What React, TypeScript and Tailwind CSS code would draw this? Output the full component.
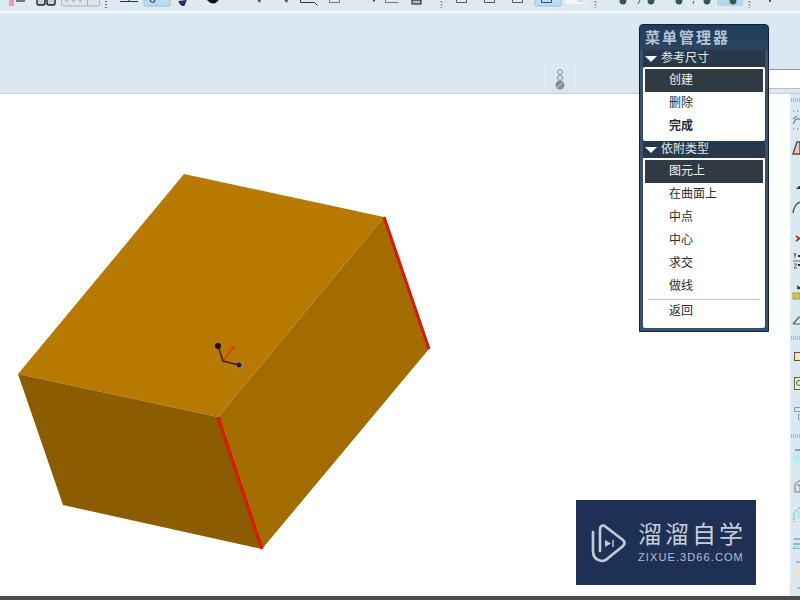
const sans = "font-['Liberation_Sans','Noto_Sans_CJK_SC',sans-serif]";

function TopIcons() {
  return (
    <svg width="800" height="11" viewBox="0 0 800 11" className="block">
      <rect x="9" y="0" width="5" height="6" fill="#e8a0a8" />
      <rect x="16" y="0" width="9" height="2" fill="#777" />
      <path d="M37 0v3q0 2 2 2h4q2 0 2-2V0M47 0v3q0 2 2 2h4q2 0 2-2V0" fill="#ccd" stroke="#222" strokeWidth="1.4" />
      <rect x="61.5" y="-3" width="38" height="9" rx="2" fill="#dde6ec" stroke="#a8b0b8" />
      <path d="M87.5 0v6" stroke="#a8b0b8" />
      <path d="M65 1h3M72 1h3M79 1h3" stroke="#999" />
      <path d="M106 1v1M106 4v1M106 7v1" stroke="#667" strokeWidth="2" strokeDasharray="1 1" />
      <path d="M120 1.5h18M129 0v1.5" stroke="#123a70" strokeWidth="1.2" />
      <rect x="144" y="-3" width="26" height="9" rx="1" fill="#bcdcf4" stroke="#9cc0da" />
      <path d="M150 0q1 3 4 2l1-2" fill="none" stroke="#145" strokeWidth="1.2" />
      <path d="M179 1q2 5 5 4l2-5" fill="#336" stroke="#127" strokeWidth="1.4" />
      <path d="M207 0q6 7 12 0z" fill="#111" />
      <path d="M257 0l3 3 1-3zM284 0l3 3 1-3z" fill="#556" />
      <path d="M300.5 0v2.5h14l3 3" fill="none" stroke="#333" />
      <path d="M329.5 0v2.5h10V0M385.5 0v2.5h13" fill="none" stroke="#777" />
      <path d="M373 0l1 2.5 1-2.5z" fill="#222" />
      <rect x="412" y="0" width="9" height="4" fill="#bbb" stroke="#111" />
      <path d="M441 1v1M441 4v1M441 7v1M442 2v1M442 5v1" stroke="#667" strokeDasharray="1 1" />
      <path d="M456.5 0v2.5h10V0M484.5 0v2.5h10V0M512.5 0v2.5h10V0" fill="none" stroke="#556" />
      <rect x="535" y="-3" width="26" height="9" rx="1" fill="#bcdcf4" stroke="#9cc0da" />
      <path d="M541.5 0v2.5h10V0" fill="none" stroke="#445" />
      <rect x="566" y="-2" width="20" height="6" fill="#f5f8fb" />
      <path d="M577 0h8v2h-8z" fill="#d6dde6" />
      <path d="M595 1v1M595 4v1M595 7v1M596 2v1M596 5v1" stroke="#667" />
      <g fill="#2c5a4c">
        <circle cx="623" cy="1" r="3.4" />
        <circle cx="651" cy="1" r="3.4" />
        <circle cx="679" cy="1" r="3.4" />
        <circle cx="707" cy="1" r="3.4" />
      </g>
      <path d="M640 0l-2 4M694 1l-1 3" stroke="#555" />
      <rect x="717" y="-2" width="26" height="8" rx="1" fill="#b6d4ea" />
      <circle cx="733" cy="1" r="3.4" fill="#2c5a4c" />
      <path d="M749 1v1M749 4v1M749 7v1M750 2v1M750 5v1" stroke="#667" />
      <circle cx="770" cy="1" r="1" fill="#222" />
    </svg>
  );
}

function SideIcons() {
  return (
    <svg width="10" height="502" viewBox="0 1 10 502" className="block">
      <path d="M1 6h9M1 8h9M1 244h9M1 246h9M1 342h9M1 344h9" stroke="#7f8ea0" strokeDasharray="1 1" />
      <path d="M3 26l4-3M3 31l3-5h4M3 18h1M7 18h1M3 36h1M7 36h1" stroke="#1f6f9f" fill="none" />
      <path d="M3 61l4-12h3v12z" fill="#ecc9b8" stroke="#5c4a44" strokeWidth="1.4" />
      <path d="M6 96l3-3h1v3z" fill="#333" />
      <path d="M3 120q1-9 7-11" fill="none" stroke="#444" strokeWidth="1.2" />
      <path d="M6 143l4 3M6 148l4-3" stroke="#8a3a1c" strokeWidth="1.6" />
      <path d="M4 160l1 3 1-3M5 163v2M3 168h7M4 171h3l-3 4h3" stroke="#445" fill="none" strokeWidth=".8" />
      <rect x="8" y="162" width="2" height="2" fill="#222" />
      <rect x="8" y="171" width="2" height="2" fill="#222" />
      <path d="M7 193l3 3M7 196l3-2" stroke="#3a2a18" strokeWidth="1.4" />
      <rect x="3" y="200" width="7" height="6" fill="#c8c850" stroke="#99a050" />
      <path d="M3 231l6-7h1M4 231h6" fill="none" stroke="#555" strokeWidth="1.2" />
      <rect x="4.5" y="259.5" width="7" height="8" fill="#f6e9a6" stroke="#555" />
      <rect x="4.5" y="284.5" width="7" height="12" fill="#eef2d4" stroke="#5c6a2a" />
      <circle cx="9" cy="290" r="2.5" fill="none" stroke="#555" />
      <path d="M4.5 314.5h6v4h-6zM8.5 321.5h3v5h-3z" fill="none" stroke="#8a96a4" />
      <rect x="3" y="360" width="7" height="10" fill="#a8f0ee" opacity=".7" />
      <path d="M5 357h5" stroke="#2a5a6a" />
      <path d="M5 399v-8l4-3h1M5 399h5M7 392h3v6" fill="none" stroke="#777" />
      <path d="M4 429v-9l5-5h1" fill="none" stroke="#777" strokeDasharray="1 1" />
      <rect x="7" y="418" width="3" height="7" fill="#a8f0ee" />
      <path d="M4 446h6M3 451h7M3 455h7" stroke="#4a8a9a" />
      <rect x="5" y="452" width="5" height="3" fill="#a8f0ee" />
      <path d="M6 469h4M7 495h3" stroke="#888" />
      <rect x="5" y="474" width="5" height="10" fill="#f1e4cf" />
    </svg>
  );
}

function MenuRow({ label, selected, bold }: { label: string; selected?: boolean; bold?: boolean }) {
  return (
    <div
      className={`h-[23px] pl-[24px] text-[12px] leading-[23px] ${
        selected ? "bg-[#2f3a42] text-[#f2f4f5]" : "text-[#2a2d30]"
      } ${bold ? "font-bold" : ""}`}
    >
      {label}
    </div>
  );
}

function GroupHeader({ label }: { label: string }) {
  return (
    <div className="flex h-[17px] items-center bg-[#26384a] pl-[2px] text-[12px] leading-[17px] text-[#e4e9ee]">
      <svg width="12" height="8" viewBox="0 0 12 8" className="mr-[4px]">
        <path d="M0 1h12L6 7z" fill="#fff" />
      </svg>
      {label}
    </div>
  );
}

function MenuManager() {
  return (
    <div
      className={`${sans} absolute left-[639px] top-[24px] w-[130px] rounded-t-[4px] border border-[#10233c] bg-[#38526c] px-[3px] pb-[3px]`}
    >
      <div className="-mx-[3px] h-[25px] rounded-t-[4px] bg-gradient-to-b from-[#1d3c5c] to-[#2c4662] pl-[5px] text-[15px] font-bold leading-[25px] tracking-[2px] text-[#b6c3d2]">
        菜单管理器
      </div>
      <GroupHeader label="参考尺寸" />
      <div className="rounded-[2px] border-2 border-white bg-white pb-[1px]">
        <MenuRow label="创建" selected />
        <MenuRow label="删除" />
        <MenuRow label="完成" bold />
      </div>
      <GroupHeader label="依附类型" />
      <div className="rounded-b-[2px] border-2 border-white bg-white pb-[3px]">
        <MenuRow label="图元上" selected />
        <MenuRow label="在曲面上" />
        <MenuRow label="中点" />
        <MenuRow label="中心" />
        <MenuRow label="求交" />
        <MenuRow label="做线" />
        <div className="mx-[3px] mt-[1px] border-t border-[#c4c6c8]" />
        <MenuRow label="返回" />
      </div>
    </div>
  );
}

function Watermark() {
  return (
    <div className={`${sans} absolute left-[576px] top-[500px] flex h-[85px] w-[180px] items-center bg-[#1e3056] pl-[15px]`}>
      <svg width="36" height="40" viewBox="0 0 36 40" className="mr-[11px]" fill="none">
        <path d="M2 9V28Q2 37 11 38Q14 38 16 36" stroke="#c4ccd6" strokeWidth="2.6" strokeLinecap="round" />
        <path d="M9 28V7Q9 2 13 2.5L32 17Q35 20 32 23L16 36" stroke="#c4ccd6" strokeWidth="2.6" strokeLinecap="round" strokeLinejoin="round" />
        <path d="M14 17l6 3.5-6 3.5z" fill="#c4ccd6" />
        <path d="M22 17v7" stroke="#c4ccd6" strokeWidth="1.4" />
      </svg>
      <div className="flex flex-col">
        <span className="text-[24px] leading-[28px] tracking-[3px] text-[#c8ced8]">溜溜自学</span>
        <span className="mt-[2px] text-[11px] leading-[13px] tracking-[1.1px] text-[#b8c0cc]">ZIXUE.3D66.COM</span>
      </div>
    </div>
  );
}

function Model() {
  return (
    <svg width="790" height="502" viewBox="0 94 790 502" className="block">
      <polygon points="184,174 384,217 218,417 18,374" fill="#b87900" />
      <polygon points="384,217 429,349 262,549 218,417" fill="#a36c00" />
      <polygon points="18,374 218,417 262,549 63,505" fill="#8c5c00" />
      <path d="M384 217L429 349M218 417L262 549" stroke="#e01408" strokeWidth="3" />
      <path d="M223 361L233 348" stroke="#d8400c" strokeWidth="1.5" />
      <circle cx="239" cy="365" r="4.5" fill="#a08a50" opacity=".6" />
      <path d="M218 346L223 361L239 365" fill="none" stroke="#3c2418" strokeWidth="1.5" />
      <circle cx="233" cy="348" r="2" fill="#e03a10" />
      <circle cx="218" cy="346" r="3" fill="#111" />
      <circle cx="239" cy="365" r="2.5" fill="#2a1a70" />
    </svg>
  );
}

export default function App() {
  return (
    <div className="relative h-[600px] w-[800px] overflow-hidden bg-white">
      <div className="h-[11px] bg-[#dee9f2]">
        <TopIcons />
      </div>
      <div className="h-[2px] bg-[#f4f9fc]" />
      <div className="flex h-[81px] items-end justify-end border-b border-[#c4d0d6] bg-[#dce8f1]">
        <div className="mr-[184px] flex h-[28px] w-[32px] items-end justify-center border-x border-[#e6eef4] pb-[2px]">
          <svg width="12" height="22" viewBox="0 1 12 22">
            <circle cx="6" cy="4" r="2.5" fill="#dde4ea" stroke="#8a949c" />
            <circle cx="6" cy="10" r="2.5" fill="#dde4ea" stroke="#8a949c" />
            <circle cx="6" cy="17" r="4.5" fill="#8a8f94" />
            <path d="M3 20l6-6" stroke="#c4c8cc" />
          </svg>
        </div>
        <div className="mb-[4px] h-[20px] w-[40px] border-y border-t-[#8e979e] border-b-[#b4bec6] bg-white" />
      </div>
      <div className="flex h-[502px]">
        <div className="w-[790px]">
          <Model />
        </div>
        <div className="w-[10px] bg-[#dce8f1]">
          <SideIcons />
        </div>
      </div>
      <div className="h-[4px] bg-[#4c4c4c]" />
      <MenuManager />
      <Watermark />
    </div>
  );
}
